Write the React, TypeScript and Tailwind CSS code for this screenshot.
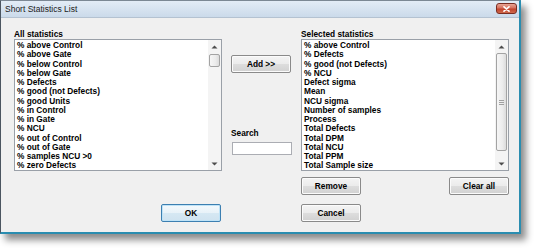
import React from "react";

const allStats = [
  "% above Control",
  "% above Gate",
  "% below Control",
  "% below Gate",
  "% Defects",
  "% good (not Defects)",
  "% good Units",
  "% in Control",
  "% in Gate",
  "% NCU",
  "% out of Control",
  "% out of Gate",
  "% samples NCU >0",
  "% zero Defects",
];

const selectedStats = [
  "% above Control",
  "% Defects",
  "% good (not Defects)",
  "% NCU",
  "Defect sigma",
  "Mean",
  "NCU sigma",
  "Number of samples",
  "Process",
  "Total Defects",
  "Total DPM",
  "Total NCU",
  "Total PPM",
  "Total Sample size",
];

function Arrow({ up }: { up?: boolean }) {
  return (
    <svg width="7" height="4" viewBox="0 0 7 4" className="block">
      {up ? <path d="M0.5 3.5 L3.5 0.5 L6.5 3.5 Z" fill="#4d4d4d" /> : <path d="M0.5 0.5 L3.5 3.5 L6.5 0.5 Z" fill="#4d4d4d" />}
    </svg>
  );
}

function ScrollBar({ thumbTop, thumbHeight, grip }: { thumbTop: number; thumbHeight: number; grip?: boolean }) {
  return (
    <div className="flex w-[13px] flex-col bg-[#f4f4f4]">
      <div className="flex h-[13px] items-center justify-center">
        <Arrow up />
      </div>
      <div className="relative flex-1">
        <div
          className="absolute left-[1px] right-[1px] flex items-center justify-center rounded-[2px] border border-[#a3a3a3] bg-[linear-gradient(90deg,#f6f6f6,#ececec_60%,#dcdcdc)]"
          style={{ top: thumbTop, height: thumbHeight }}
        >
          {grip && (
            <div className="flex flex-col gap-[1px]">
              <div className="h-px w-[5px] bg-[#a0a0a0]" />
              <div className="h-px w-[5px] bg-[#a0a0a0]" />
              <div className="h-px w-[5px] bg-[#a0a0a0]" />
            </div>
          )}
        </div>
      </div>
      <div className="flex h-[12px] items-center justify-center">
        <Arrow />
      </div>
    </div>
  );
}

function ListBox({ items, thumbTop, thumbHeight, grip }: { items: string[]; thumbTop: number; thumbHeight: number; grip?: boolean }) {
  return (
    <div className="flex h-[132px] border border-[#9aa0a8] bg-white">
      <ul className="flex-1 pl-[2px] pt-[1px]">
        {items.map((s) => (
          <li key={s} className="whitespace-nowrap text-[8.3px] leading-[9.25px] font-bold text-black">
            {s}
          </li>
        ))}
      </ul>
      <ScrollBar thumbTop={thumbTop} thumbHeight={thumbHeight} grip={grip} />
    </div>
  );
}

function Button({ label, primary, className }: { label: string; primary?: boolean; className?: string }) {
  return (
    <button
      className={
        "flex h-[18px] w-[60px] items-center justify-center rounded-[2px] border text-[8.3px] font-bold text-black " +
        (primary
          ? "border-[#3c7fb1] bg-[linear-gradient(180deg,#f4f9fc_0%,#e8f2f8_50%,#d6e8f3_51%,#cfe3f0_100%)] shadow-[inset_0_0_0_1px_#bfe3f7] "
          : "border-[#8a8a8a] bg-[linear-gradient(180deg,#f4f4f4_0%,#ebebeb_50%,#dddddd_51%,#d1d1d1_100%)] shadow-[inset_0_0_0_1px_#fbfbfb] ") +
        (className ?? "")
      }
    >
      {label}
    </button>
  );
}

export default function App() {
  return (
    <div className="relative h-[249px] w-[536px] overflow-hidden bg-white" style={{ fontFamily: '"Liberation Sans", Arial, sans-serif' }}>
      <div className="flex h-[234px] w-[521px] flex-col border-t border-l border-r-2 border-b-2 border-t-[#7c8894] border-l-[#4b5560] border-r-[#2a8db0] border-b-[#2a8db0] shadow-[5px_6px_7px_rgba(0,0,0,0.45)]">
        {/* Title bar */}
        <div className="flex h-[16px] items-center justify-between bg-[linear-gradient(180deg,#e3ecf6,#cbdaea)] pl-[4px] pr-[2px]">
          <span className="text-[8.5px] text-[#1b1b1b]">Short Statistics List</span>
          <div className="mb-[1px] flex h-[11px] w-[21px] items-center justify-center rounded-[3px] border border-[#7a2d22] bg-[linear-gradient(180deg,#e9a595,#d6705d_45%,#c1422c_55%,#cf6a4c)]">
            <svg width="7" height="6" viewBox="0 0 7 6">
              <path d="M1 0.8 L6 5.2 M6 0.8 L1 5.2" stroke="#ffffff" strokeWidth="1.6" strokeLinecap="round" />
            </svg>
          </div>
        </div>

        {/* Client area */}
        <div className="flex flex-1 gap-[9px] border-t border-[#b4c2d1] bg-[#f0f0f0] pl-[13px] pt-[11px]">
          <div className="flex w-[208px] flex-col">
            <p className="h-[10px] text-[8.3px] leading-[10px] font-bold text-black">All statistics</p>
            <ListBox items={allStats} thumbTop={1} thumbHeight={13} />
            <Button label="OK" primary className="mt-[33px] ml-auto mr-[1px]" />
          </div>

          <div className="flex w-[61px] flex-col">
            <Button label="Add >>" className="mt-[26px]" />
            <p className="mt-[55px] h-[10px] text-[8.3px] leading-[10px] font-bold text-black">Search</p>
            <input className="mt-[4px] ml-[1px] h-[13px] w-[60px] border border-[#abadb3] bg-white outline-none" />
          </div>

          <div className="flex w-[208px] flex-col">
            <p className="h-[10px] text-[8.3px] leading-[10px] font-bold text-black">Selected statistics</p>
            <ListBox items={selectedStats} thumbTop={0} thumbHeight={98} grip />
            <div className="mt-[6px] flex justify-between">
              <Button label="Remove" />
              <Button label="Clear all" />
            </div>
            <Button label="Cancel" className="mt-[9px]" />
          </div>
        </div>
      </div>
    </div>
  );
}
